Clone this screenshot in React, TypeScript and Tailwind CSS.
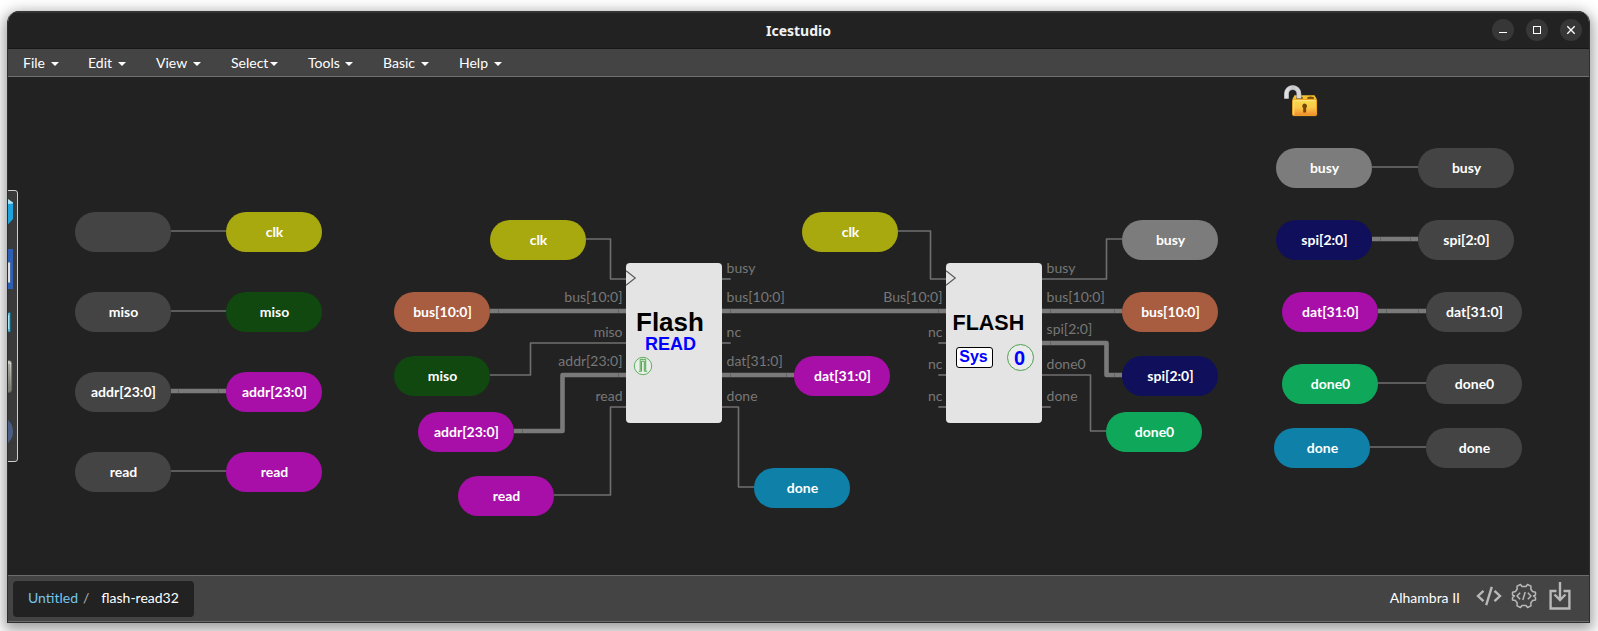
import React from "react";

type PillSpec = { x: number; y: number; label: string; tone: string };
type WireSpec = { d: string; bus?: boolean };
type LabelSpec = { x: number; y: number; text: string; side: "left" | "right" };

const DARK = "bg-[#444444]";
const YELLOW = "bg-[#a8a80f]";
const GREEN = "bg-[#10480f]";
const MAGENTA = "bg-[#a80fa8]";
const RUST = "bg-[#a85c40]";
const GRAY = "bg-[#7c7c7c]";
const NAVY = "bg-[#0f0f5c]";
const EMERALD = "bg-[#0fa85a]";
const TEAL = "bg-[#0f80a8]";

const pills: PillSpec[] = [
  { x: 75, y: 212, label: "", tone: DARK },
  { x: 226, y: 212, label: "clk", tone: YELLOW },
  { x: 75, y: 292, label: "miso", tone: DARK },
  { x: 226, y: 292, label: "miso", tone: GREEN },
  { x: 75, y: 372, label: "addr[23:0]", tone: DARK },
  { x: 226, y: 372, label: "addr[23:0]", tone: MAGENTA },
  { x: 75, y: 452, label: "read", tone: DARK },
  { x: 226, y: 452, label: "read", tone: MAGENTA },
  { x: 490, y: 220, label: "clk", tone: YELLOW },
  { x: 394, y: 292, label: "bus[10:0]", tone: RUST },
  { x: 394, y: 356, label: "miso", tone: GREEN },
  { x: 418, y: 412, label: "addr[23:0]", tone: MAGENTA },
  { x: 458, y: 476, label: "read", tone: MAGENTA },
  { x: 802, y: 212, label: "clk", tone: YELLOW },
  { x: 794, y: 356, label: "dat[31:0]", tone: MAGENTA },
  { x: 754, y: 468, label: "done", tone: TEAL },
  { x: 1122, y: 220, label: "busy", tone: GRAY },
  { x: 1122, y: 292, label: "bus[10:0]", tone: RUST },
  { x: 1122, y: 356, label: "spi[2:0]", tone: NAVY },
  { x: 1106, y: 412, label: "done0", tone: EMERALD },
  { x: 1276, y: 148, label: "busy", tone: GRAY },
  { x: 1418, y: 148, label: "busy", tone: DARK },
  { x: 1276, y: 220, label: "spi[2:0]", tone: NAVY },
  { x: 1418, y: 220, label: "spi[2:0]", tone: DARK },
  { x: 1282, y: 292, label: "dat[31:0]", tone: MAGENTA },
  { x: 1426, y: 292, label: "dat[31:0]", tone: DARK },
  { x: 1282, y: 364, label: "done0", tone: EMERALD },
  { x: 1426, y: 364, label: "done0", tone: DARK },
  { x: 1274, y: 428, label: "done", tone: TEAL },
  { x: 1426, y: 428, label: "done", tone: DARK },
];

const wires: WireSpec[] = [
  { d: "M171 231H226" },
  { d: "M171 311H226" },
  { d: "M171 391H226", bus: true },
  { d: "M171 471H226" },
  { d: "M586 239H610.5V279H626" },
  { d: "M490 311H626", bus: true },
  { d: "M490 375H530.5V343H626" },
  { d: "M514 431H562.5V375H626", bus: true },
  { d: "M554 495H610.5V407H626" },
  { d: "M722 279H730.7" },
  { d: "M722 311H946", bus: true },
  { d: "M722 343H730.7" },
  { d: "M722 375H794", bus: true },
  { d: "M722 407H738.5V487H754" },
  { d: "M898 231H930.5V279H946" },
  { d: "M938.3 343H946" },
  { d: "M938.3 375H946" },
  { d: "M938.3 407H946" },
  { d: "M1042 279H1106.5V239H1122" },
  { d: "M1042 311H1122", bus: true },
  { d: "M1042 343H1106.5V375H1122", bus: true },
  { d: "M1042 375H1090.5V431H1106" },
  { d: "M1042 407H1050.7" },
  { d: "M1372 167H1418" },
  { d: "M1372 239H1418", bus: true },
  { d: "M1378 311H1426", bus: true },
  { d: "M1378 383H1426" },
  { d: "M1370 447H1426" },
];

const seams: [number, number][] = [
  [178.5, 391], [218.5, 391], [498.5, 311], [618.5, 311], [522.5, 431], [618.5, 375],
  [730.5, 311], [938.5, 311], [730.5, 375], [786.5, 375], [1050.5, 311], [1114.5, 311],
  [1050.5, 343], [1114.5, 375], [1380.5, 239], [1410.5, 239], [1386.5, 311], [1418.5, 311],
];

// x is the text's near edge, y its baseline
const labels: LabelSpec[] = [
  { x: 622.5, y: 302, text: "bus[10:0]", side: "left" },
  { x: 622.5, y: 337, text: "miso", side: "left" },
  { x: 622.5, y: 366, text: "addr[23:0]", side: "left" },
  { x: 622.5, y: 401, text: "read", side: "left" },
  { x: 726.6, y: 273, text: "busy", side: "right" },
  { x: 726.6, y: 302, text: "bus[10:0]", side: "right" },
  { x: 726.6, y: 337, text: "nc", side: "right" },
  { x: 726.6, y: 366, text: "dat[31:0]", side: "right" },
  { x: 726.6, y: 401, text: "done", side: "right" },
  { x: 942.5, y: 302, text: "Bus[10:0]", side: "left" },
  { x: 942.5, y: 337, text: "nc", side: "left" },
  { x: 942.5, y: 369, text: "nc", side: "left" },
  { x: 942.5, y: 401, text: "nc", side: "left" },
  { x: 1046.6, y: 273, text: "busy", side: "right" },
  { x: 1046.6, y: 302, text: "bus[10:0]", side: "right" },
  { x: 1046.6, y: 334, text: "spi[2:0]", side: "right" },
  { x: 1046.6, y: 369, text: "done0", side: "right" },
  { x: 1046.6, y: 401, text: "done", side: "right" },
];

const menus = [
  { name: "File", box: "w-[65px]", gap: "ml-[6px]" },
  { name: "Edit", box: "w-[68px]", gap: "ml-[6px]" },
  { name: "View", box: "w-[75px]", gap: "ml-[6px]" },
  { name: "Select", box: "w-[77px]", gap: "ml-[2px]" },
  { name: "Tools", box: "w-[75px]", gap: "ml-[5px]" },
  { name: "Basic", box: "w-[76px]", gap: "ml-[6px]" },
  { name: "Help", box: "w-[60px]", gap: "ml-[6px]" },
];

// Canvas-space origin inside the window
const OX = 8;
const OY = 77;

function Pill({ x, y, label, tone }: PillSpec) {
  return (
    <div
      className={`absolute flex h-10 w-24 items-center justify-center rounded-[20px] pl-px text-[14px] leading-5 font-bold text-white ${tone}`}
      style={{ left: x - OX, top: y - OY }}
    >
      {label}
    </div>
  );
}

function PortLabel({ x, y, text, side }: LabelSpec) {
  return (
    <span
      className="absolute text-[14px] leading-5 whitespace-nowrap text-[#777777]"
      style={
        side === "left"
          ? { right: 1589 - x, top: y - 15 - OY }
          : { left: x - OX, top: y - 15 - OY }
      }
    >
      {text}
    </span>
  );
}

function ClockMark() {
  return (
    <svg className="absolute top-[7px] left-0" width="11" height="16" viewBox="0 0 11 16" fill="none" stroke="#555" strokeWidth="1.1">
      <path d="M0 .8L9.3 8L0 15.2" />
    </svg>
  );
}

function FlashReadBlock() {
  return (
    <div className="absolute top-[186px] left-[618px] h-40 w-24 rounded-[4px] bg-[#e4e4e4] font-['Liberation_Sans',sans-serif] font-bold">
      <ClockMark />
      <div className="absolute top-[44px] left-[10px] text-[26px] leading-[30px] text-black">Flash</div>
      <div className="absolute top-[70px] left-[19px] text-[18px] leading-[22px] text-[#0000ff]">READ</div>
      <svg className="absolute top-[93px] left-[7px]" width="20" height="20" viewBox="0 0 20 20" fill="none" stroke="#3fa03f">
        <circle cx="10" cy="10" r="8.7" strokeWidth=".8" fill="#e9efe9" />
        <path d="M5.8 15.200H8.500V5.200H11.300V15.200H14.200M7.200 14.500V3.300H12.700V14.500" strokeWidth=".9" />
      </svg>
    </div>
  );
}

function FlashSysBlock() {
  return (
    <div className="absolute top-[186px] left-[938px] h-40 w-24 rounded-[4px] bg-[#e4e4e4] font-['Liberation_Sans',sans-serif]">
      <ClockMark />
      <div className="absolute top-[48px] left-[6.500px] text-[21.500px] leading-6 font-bold text-black">FLASH</div>
      <div className="absolute top-[84px] left-[10px] flex h-[21px] w-[37px] items-center justify-center rounded-[3px] border border-black bg-white pr-[2px] pb-[2px] text-[16px] leading-5 font-bold text-[#0000ff]">
        Sys
      </div>
      <div className="absolute top-[81px] left-[61px] flex h-[27px] w-[27px] items-center justify-center rounded-full border border-[#4fa04f] bg-[#ebebeb] pr-[2px] text-[20px] font-bold text-[#0000ff]">
        0
      </div>
    </div>
  );
}

function OpenLock() {
  return (
    <svg className="absolute top-[7px] left-[1275px]" width="36" height="34" viewBox="0 0 36 34">
      <defs>
        <linearGradient id="lockBody" x1="0" y1="0" x2="0" y2="1">
          <stop offset="0" stopColor="#f5dc4a" />
          <stop offset=".5" stopColor="#fbc94a" />
          <stop offset="1" stopColor="#f08a2c" />
        </linearGradient>
        <linearGradient id="shackle" x1="0" y1="0" x2="1" y2="0">
          <stop offset="0" stopColor="#e2e2e4" />
          <stop offset=".5" stopColor="#c4c4c8" />
          <stop offset="1" stopColor="#d8d8da" />
        </linearGradient>
      </defs>
      <path d="M9.2 15.500L11.5 11.2H31.5L34 15.500Z" fill="#f2c230" />
      <ellipse cx="16.5" cy="14" rx="3.4" ry="1.500" fill="#7a4e0a" />
      <ellipse cx="27.6" cy="14" rx="3.4" ry="1.500" fill="#7a4e0a" />
      <path d="M3.5 14.700V9.700a6.200 6.200 0 0 1 12.400 0V14.400" fill="none" stroke="#8a8a90" strokeWidth="5" />
      <path d="M3.5 14.400V9.700a6.200 6.200 0 0 1 12.400 0V14.200" fill="none" stroke="url(#shackle)" strokeWidth="4" />
      <rect x="9.6" y="15.400" width="24" height="16.200" rx="1" fill="url(#lockBody)" stroke="#f6a623" strokeWidth="1" />
      <path d="M10.8 31V16.600H32.600" fill="none" stroke="#ffe98a" strokeWidth=".9" />
      <path d="M21.5 19.600a2.600 2.600 0 0 1 1.600 4.600V28.500h-2.900V24.200A2.600 2.600 0 0 1 21.500 19.600Z" fill="#744708" />
    </svg>
  );
}

function Toolbox() {
  return (
    <div className="absolute top-[113px] left-[-30px] h-[272px] w-10 overflow-hidden rounded-[3px] border border-[#cfcfcf] bg-[#3a3a3a]">
      <svg className="absolute top-0 left-[29px]" width="9" height="270" viewBox="0 0 9 270">
        <defs>
          <linearGradient id="silver" x1="0" y1="0" x2="0" y2="1">
            <stop offset="0" stopColor="#d2d2cc" />
            <stop offset="1" stopColor="#77776f" />
          </linearGradient>
        </defs>
        <path d="M0 11L5 12V28L0 33.500Z" fill="#1fa3dd" />
        <path d="M0 8L5 11.500V12.500L0 13Z" fill="#a9e4fa" />
        <rect x="0" y="58" width="5" height="40" fill="#2f5fb3" />
        <rect x="0" y="71.500" width="2" height="20" fill="#f2f2f2" stroke="#999" strokeWidth=".5" />
        <rect x="-4" y="121.500" width="6.500" height="19.500" rx="1" fill="#5bb5cc" stroke="#1e5f78" strokeWidth="1" />
        <rect x="0" y="124" width="1" height="14" fill="#a5e6f5" />
        <rect x="-6" y="169.500" width="9.800" height="32" rx="3" fill="url(#silver)" stroke="#5c5c56" strokeWidth=".8" />
        <path d="M1 173V198" stroke="#6c6c66" strokeWidth=".7" />
        <circle cx="-11" cy="240.500" r="16" fill="#4a5f86" />
      </svg>
    </div>
  );
}

function Schematic() {
  return (
    <main className="relative min-h-0 flex-1 overflow-hidden bg-[#222222]">
      <svg className="absolute inset-0" width="1581" height="498" viewBox="8 77 1581 498" fill="none">
        {wires.map((w) => (
          <path key={w.d} d={w.d} stroke={w.bus ? "#7a7a7a" : "#707070"} strokeWidth={w.bus ? 4.6 : 1.6} strokeLinejoin="round" />
        ))}
        {seams.map(([x, y]) => (
          <path key={`${x}-${y}`} d={`M${x} ${y - 2.3}V${y + 2.3}`} stroke="#5c5c5c" strokeWidth=".7" />
        ))}
      </svg>
      {labels.map((l) => (
        <PortLabel key={`${l.x}-${l.y}`} {...l} />
      ))}
      {pills.map((p) => (
        <Pill key={`${p.x}-${p.y}`} {...p} />
      ))}
      <FlashReadBlock />
      <FlashSysBlock />
      <OpenLock />
      <Toolbox />
    </main>
  );
}

function TitleBar() {
  const button = "flex size-[22px] items-center justify-center rounded-full bg-[#373737]";
  return (
    <header className="grid h-[38px] shrink-0 grid-cols-[1fr_auto_1fr] items-start border-t-2 border-b border-t-[#343434] border-b-[#181818] bg-[#222222] pt-[6px]">
      <span />
      <h1 className="mt-[2px] font-['Noto_Sans',sans-serif] text-[14px] leading-5 font-bold text-[#f2f2f2]">Icestudio</h1>
      <div className="flex justify-end gap-3 pr-[7px]">
        <span className={button}>
          <svg width="10" height="10" viewBox="0 0 10 10" stroke="#fff"><path d="M1 7.500H9" /></svg>
        </span>
        <span className={button}>
          <svg width="10" height="10" viewBox="0 0 10 10" fill="none" stroke="#fff"><rect x="1.500" y="1.500" width="7" height="7" /></svg>
        </span>
        <span className={button}>
          <svg width="10" height="10" viewBox="0 0 10 10" stroke="#fff" strokeWidth="1.300"><path d="M1.300 1.300L8.700 8.700M8.700 1.300L1.300 8.700" /></svg>
        </span>
      </div>
    </header>
  );
}

function MenuBar() {
  return (
    <nav className="flex h-7 shrink-0 items-center border-b border-[#707070] bg-[#444444] pl-[15px] text-[14px] leading-5 text-white">
      {menus.map((m) => (
        <div key={m.name} className={`flex items-center ${m.box}`}>
          <span>{m.name}</span>
          <svg className={`mt-[3px] ${m.gap}`} width="8" height="4" viewBox="0 0 8 4" fill="#fff"><path d="M0 0H8L4 4Z" /></svg>
        </div>
      ))}
    </nav>
  );
}

function StatusBar() {
  return (
    <footer className="flex h-[47px] shrink-0 items-center justify-between border-t border-b border-[#6c6c6c] bg-[#444444] text-[14px] leading-5">
      <div className="ml-[5px] flex h-9 w-[181px] items-center rounded-[4px] bg-[#222222] pb-[2px] pl-[15px] whitespace-nowrap">
        <span className="text-[#76c5ea]">Untitled</span>
        <span className="ml-[5px] text-[#b5b5b5]">/</span>
        <span className="ml-[12px] text-white">flash-read32</span>
      </div>
      <div className="flex items-center pr-[17px] pb-[2px] text-white">
        <span>Alhambra II</span>
        <svg className="ml-[16px] -mt-1" width="26" height="20" viewBox="0 0 26 20" fill="none" stroke="#b8b8b8" strokeWidth="2.400">
          <path d="M7.500 4.800L2 10L7.500 15.200M18.500 4.800L24 10L18.500 15.200M15.800 .8L10.200 19.200" />
        </svg>
        <svg className="ml-[9px] -mt-1" width="26" height="26" viewBox="0 0 26 26" fill="none" stroke="#b8b8b8" strokeWidth="1.500" strokeLinejoin="round">
          <path d="M9.500 1.500L11 3.500H15L16.500 1.500L20 3.200L19.800 6L21.500 8.500L24.500 9.300V12L22.500 13L24.500 14.500V17L21.500 17.600L19.800 20L20 22.800L16.500 24.500L15 22.500H11L9.500 24.500L6 22.800L6.200 20L4.500 17.600L1.500 17V14.500L3.500 13L1.500 12V9.300L4.500 8.500L6.200 6L6 3.200Z" />
          <path d="M9.200 9.800L6 13L9.200 16.200M16.800 9.800L20 13L16.800 16.200M14.200 9L11.800 17" />
        </svg>
        <svg className="mr-px ml-[12px] -mt-1" width="22" height="28" viewBox="0 0 22 28" fill="none" stroke="#b8b8b8" strokeWidth="2.400">
          <path d="M7.500 9H1.600V26.500H20.400V9H14.500M11 0V17.500M5.500 12.500L11 18L16.500 12.500" />
        </svg>
      </div>
    </footer>
  );
}

export default function App() {
  return (
    <div className="flex h-[631px] w-full overflow-hidden bg-white pt-[11px] pr-2 pb-2 pl-[7px] font-['Lato',sans-serif]">
      <div className="flex min-w-0 flex-1 flex-col overflow-hidden rounded-t-[12px] border border-t-0 border-[#2e2e2e] shadow-[0_4px_14px_3px_rgba(0,0,0,0.38)]">
        <TitleBar />
        <MenuBar />
        <Schematic />
        <StatusBar />
      </div>
    </div>
  );
}
